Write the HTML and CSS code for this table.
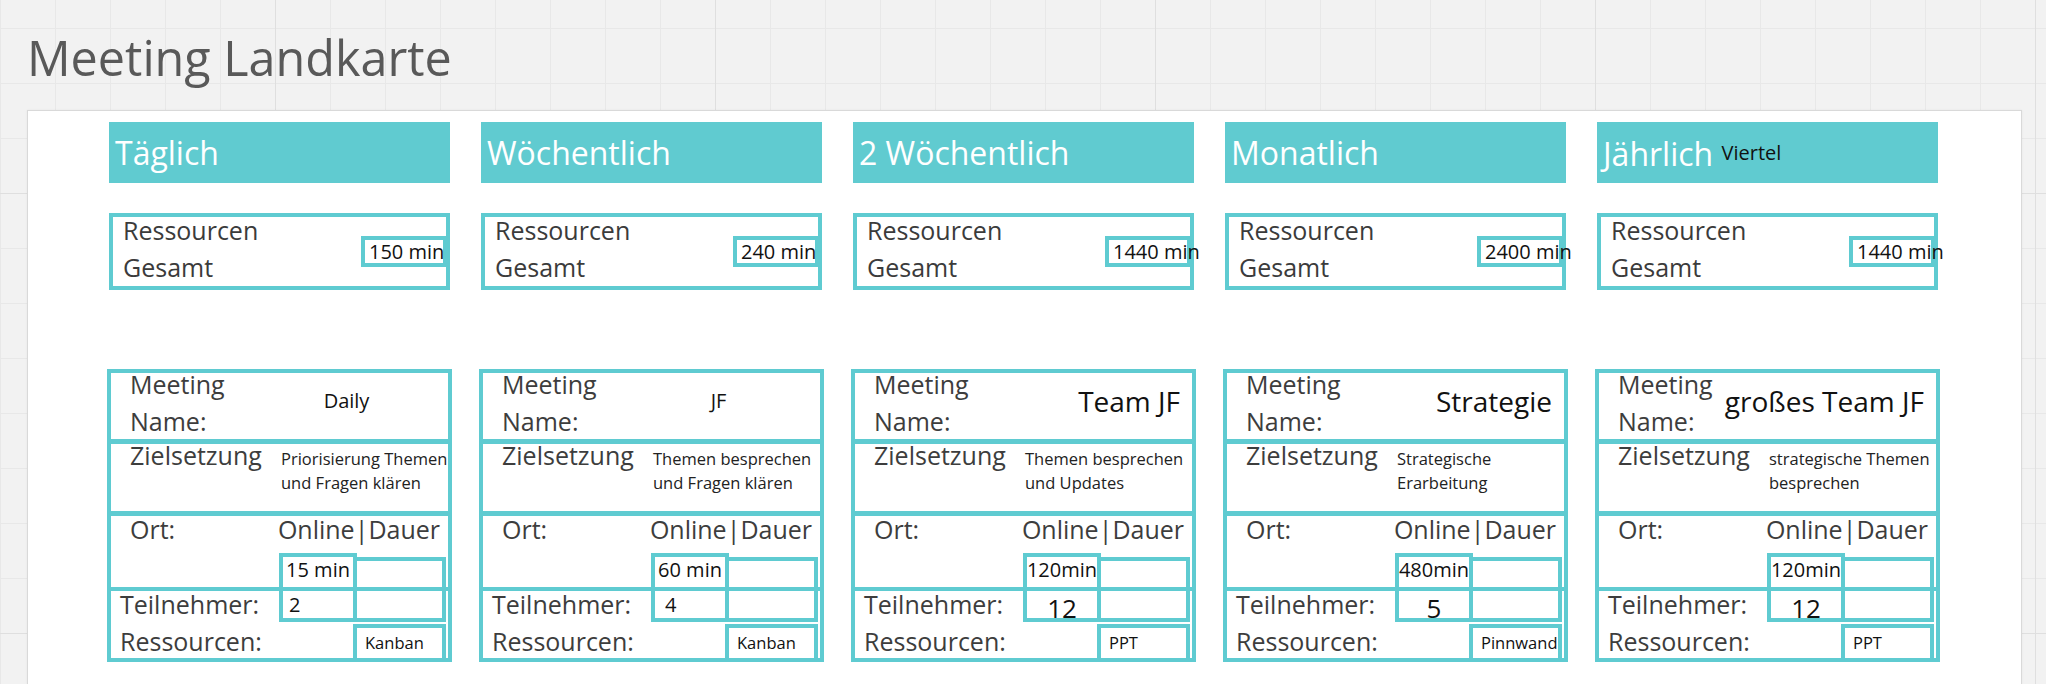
FILE: index.html
```html
<!DOCTYPE html>
<html lang="de">
<head>
<meta charset="utf-8">
<title>Meeting Landkarte</title>
<link rel="stylesheet" href="styles.css">
</head>
<body>
<div class="board">
  <h1 class="board-title">Meeting Landkarte</h1>
  <section class="frame">
    <div class="columns">

      <div class="col">
        <div class="col-head">Täglich</div>
        <div class="total">
          <div class="total-label">Ressourcen<br>Gesamt</div>
          <div class="total-val">150 min</div>
        </div>
        <div class="card">
          <div class="row row-name">
            <div class="lbl">Meeting<br>Name:</div>
            <div class="name-val">Daily</div>
          </div>
          <div class="row row-goal">
            <div class="lbl">Zielsetzung</div>
            <div class="goal-val">Priorisierung Themen<br>und Fragen klären</div>
          </div>
          <div class="row row-ort">
            <div class="lbl lbl-ort">Ort:</div>
            <div class="ort-head">Online|Dauer</div>
            <div class="c-dur">15 min</div>
            <div class="c-blank"></div>
          </div>
          <div class="row row-team">
            <div class="lbl lbl-team">Teilnehmer:</div>
            <div class="lbl lbl-res">Ressourcen:</div>
            <div class="c-num start">2</div>
            <div class="c-blank2"></div>
            <div class="c-res">Kanban</div>
          </div>
        </div>
      </div>

      <div class="col">
        <div class="col-head">Wöchentlich</div>
        <div class="total">
          <div class="total-label">Ressourcen<br>Gesamt</div>
          <div class="total-val">240 min</div>
        </div>
        <div class="card">
          <div class="row row-name">
            <div class="lbl">Meeting<br>Name:</div>
            <div class="name-val">JF</div>
          </div>
          <div class="row row-goal">
            <div class="lbl">Zielsetzung</div>
            <div class="goal-val">Themen besprechen<br>und Fragen klären</div>
          </div>
          <div class="row row-ort">
            <div class="lbl lbl-ort">Ort:</div>
            <div class="ort-head">Online|Dauer</div>
            <div class="c-dur">60 min</div>
            <div class="c-blank"></div>
          </div>
          <div class="row row-team">
            <div class="lbl lbl-team">Teilnehmer:</div>
            <div class="lbl lbl-res">Ressourcen:</div>
            <div class="c-num start wide">4</div>
            <div class="c-blank2"></div>
            <div class="c-res">Kanban</div>
          </div>
        </div>
      </div>

      <div class="col">
        <div class="col-head">2 Wöchentlich</div>
        <div class="total">
          <div class="total-label">Ressourcen<br>Gesamt</div>
          <div class="total-val">1440 min</div>
        </div>
        <div class="card">
          <div class="row row-name">
            <div class="lbl">Meeting<br>Name:</div>
            <div class="name-val big">Team JF</div>
          </div>
          <div class="row row-goal">
            <div class="lbl">Zielsetzung</div>
            <div class="goal-val">Themen besprechen<br>und Updates</div>
          </div>
          <div class="row row-ort">
            <div class="lbl lbl-ort">Ort:</div>
            <div class="ort-head">Online|Dauer</div>
            <div class="c-dur">120min</div>
            <div class="c-blank"></div>
          </div>
          <div class="row row-team">
            <div class="lbl lbl-team">Teilnehmer:</div>
            <div class="lbl lbl-res">Ressourcen:</div>
            <div class="c-num large">12</div>
            <div class="c-blank2"></div>
            <div class="c-res">PPT</div>
          </div>
        </div>
      </div>

      <div class="col">
        <div class="col-head">Monatlich</div>
        <div class="total">
          <div class="total-label">Ressourcen<br>Gesamt</div>
          <div class="total-val">2400 min</div>
        </div>
        <div class="card">
          <div class="row row-name">
            <div class="lbl">Meeting<br>Name:</div>
            <div class="name-val big">Strategie</div>
          </div>
          <div class="row row-goal">
            <div class="lbl">Zielsetzung</div>
            <div class="goal-val">Strategische<br>Erarbeitung</div>
          </div>
          <div class="row row-ort">
            <div class="lbl lbl-ort">Ort:</div>
            <div class="ort-head">Online|Dauer</div>
            <div class="c-dur">480min</div>
            <div class="c-blank"></div>
          </div>
          <div class="row row-team">
            <div class="lbl lbl-team">Teilnehmer:</div>
            <div class="lbl lbl-res">Ressourcen:</div>
            <div class="c-num large">5</div>
            <div class="c-blank2"></div>
            <div class="c-res">Pinnwand</div>
          </div>
        </div>
      </div>

      <div class="col">
        <div class="col-head">Jährlich <span class="head-note">Viertel</span></div>
        <div class="total">
          <div class="total-label">Ressourcen<br>Gesamt</div>
          <div class="total-val">1440 min</div>
        </div>
        <div class="card">
          <div class="row row-name">
            <div class="lbl">Meeting<br>Name:</div>
            <div class="name-val big">großes Team JF</div>
          </div>
          <div class="row row-goal">
            <div class="lbl">Zielsetzung</div>
            <div class="goal-val">strategische Themen<br>besprechen</div>
          </div>
          <div class="row row-ort">
            <div class="lbl lbl-ort">Ort:</div>
            <div class="ort-head">Online|Dauer</div>
            <div class="c-dur">120min</div>
            <div class="c-blank"></div>
          </div>
          <div class="row row-team">
            <div class="lbl lbl-team">Teilnehmer:</div>
            <div class="lbl lbl-res">Ressourcen:</div>
            <div class="c-num large">12</div>
            <div class="c-blank2"></div>
            <div class="c-res">PPT</div>
          </div>
        </div>
      </div>

    </div>
  </section>
</div>
</body>
</html>
```

FILE: styles.css
```css
html, body {
  margin: 0;
  padding: 0;
}

body {
  width: 2046px;
  height: 684px;
  overflow: hidden;
  font-family: "Open Sans", "Liberation Sans", sans-serif;
  background-color: #f2f2f2;
  background-image:
    linear-gradient(to right, #dfdfdf 1px, transparent 1px),
    linear-gradient(to bottom, #dfdfdf 1px, transparent 1px),
    linear-gradient(to right, #e8e8e8 1px, transparent 1px),
    linear-gradient(to bottom, #e8e8e8 1px, transparent 1px);
  background-size: 440px 440px, 440px 440px, 55px 55px, 55px 55px;
  background-position: 275px 0, 0 193px, 0 0, 0 28px;
}

.board {
  padding-left: 27px;
}

.board-title {
  margin: 0;
  padding-top: 33px;
  height: 48px;
  font-size: 48.5px;
  line-height: 48px;
  font-weight: 400;
  color: #595959;
  white-space: nowrap;
}

.frame {
  margin-top: 29px;
  width: 1995px;
  height: 574px;
  box-sizing: border-box;
  background: #ffffff;
  border: 1px solid #d9d9d9;
  border-bottom: 0;
  box-shadow: 0 0 2px rgba(0, 0, 0, 0.06);
  padding: 11px 0 0 81px;
}

.columns {
  display: flex;
  gap: 31px;
}

.col {
  width: 341px;
  display: flex;
  flex-direction: column;
}

.col-head {
  height: 61px;
  box-sizing: border-box;
  background: #60cbd0;
  color: #ffffff;
  font-size: 32px;
  line-height: 61px;
  padding-left: 6px;
  white-space: nowrap;
  overflow: hidden;
}

.head-note {
  font-size: 20px;
  color: #111111;
  vertical-align: 6px;
}

/* Ressourcen Gesamt box */
.total {
  margin-top: 30px;
  height: 77px;
  box-sizing: border-box;
  border: 4px solid #5fcbd1;
  display: flex;
  align-items: center;
  justify-content: space-between;
}

.total-label {
  align-self: flex-start;
  margin-top: -5px;
  padding-left: 10px;
  font-size: 25px;
  line-height: 37px;
  color: #3b3b3b;
  white-space: nowrap;
}

.total-val {
  width: 86px;
  height: 31px;
  box-sizing: border-box;
  border: 4px solid #5fcbd1;
  margin-right: -1px;
  padding-left: 4px;
  font-size: 20px;
  line-height: 23px;
  color: #111111;
  white-space: nowrap;
}

/* Meeting card */
.card {
  margin: 79px -2px 0;
  height: 293px;
  box-sizing: border-box;
  border: 4px solid #5fcbd1;
  display: flex;
  flex-direction: column;
}

.row {
  box-sizing: border-box;
  border-bottom: 5px solid #5fcbd1;
}

.lbl {
  padding-left: 19px;
  margin-top: -7px;
  font-size: 25px;
  line-height: 37px;
  color: #3d3d3d;
  white-space: nowrap;
}

.row-name {
  height: 71px;
  display: grid;
  grid-template-columns: 134px minmax(0, 1fr);
}

.name-val {
  min-width: 0;
  display: flex;
  justify-content: center;
  padding-top: 18px;
  font-size: 20px;
  line-height: 20px;
  color: #111111;
  white-space: nowrap;
}

.name-val.big {
  justify-content: flex-end;
  padding-right: 12px;
  padding-top: 14px;
  font-size: 28px;
  line-height: 28px;
}

.row-goal {
  height: 72px;
  display: grid;
  grid-template-columns: 170px minmax(0, 1fr);
}

.goal-val {
  min-width: 0;
  padding-top: 3px;
  font-size: 16.5px;
  line-height: 24px;
  color: #222222;
  white-space: nowrap;
}

.row-ort {
  height: 75px;
  border-bottom-width: 4px;
  display: grid;
  grid-template-columns: 168px 78px minmax(0, 1fr);
  grid-template-rows: 37px 34px;
}

.lbl-ort {
  grid-column: 1;
  grid-row: 1;
  margin-top: -5px;
}

.ort-head {
  grid-column: 2 / 4;
  grid-row: 1;
  justify-self: end;
  padding-right: 8px;
  margin-top: -5px;
  font-size: 25px;
  line-height: 37px;
  color: #3d3d3d;
  white-space: nowrap;
}

.c-dur {
  grid-column: 2;
  grid-row: 2;
  box-sizing: border-box;
  border: 4px solid #5fcbd1;
  border-bottom: 0;
  display: flex;
  align-items: center;
  justify-content: center;
  padding-bottom: 4px;
  font-size: 20px;
  line-height: 20px;
  color: #111111;
  white-space: nowrap;
}

.c-blank {
  grid-column: 3;
  grid-row: 2;
  margin-top: 4px;
  margin-right: 2px;
  box-sizing: border-box;
  border-top: 4px solid #5fcbd1;
  border-right: 4px solid #5fcbd1;
}

.row-team {
  height: 67px;
  border-bottom: 0;
  display: grid;
  grid-template-columns: 168px 78px minmax(0, 1fr);
  grid-template-rows: 31px 36px;
}

.lbl-team {
  grid-column: 1;
  grid-row: 1;
  padding-left: 9px;
  margin-top: -5px;
}

.lbl-res {
  grid-column: 1 / 3;
  grid-row: 2;
  padding-left: 9px;
  margin-top: 1px;
}

.c-num {
  grid-column: 2;
  grid-row: 1;
  box-sizing: border-box;
  border: 4px solid #5fcbd1;
  border-top: 0;
  display: flex;
  align-items: center;
  justify-content: center;
  font-size: 20px;
  line-height: 20px;
  color: #111111;
}

.c-num.start {
  justify-content: flex-start;
  padding-left: 6px;
}

.c-num.wide {
  padding-left: 10px;
}

.c-num.large {
  font-size: 26px;
  line-height: 26px;
  padding-top: 6px;
}

.c-blank2 {
  grid-column: 3;
  grid-row: 1;
  margin-right: 2px;
  box-sizing: border-box;
  border-bottom: 4px solid #5fcbd1;
  border-right: 4px solid #5fcbd1;
}

.c-res {
  grid-column: 3;
  grid-row: 2;
  margin-top: 2px;
  margin-left: -4px;
  margin-right: 2px;
  box-sizing: border-box;
  border-top: 4px solid #5fcbd1;
  border-left: 4px solid #5fcbd1;
  border-right: 4px solid #5fcbd1;
  display: flex;
  align-items: center;
  padding-left: 8px;
  font-size: 16.5px;
  line-height: 20px;
  color: #111111;
  white-space: nowrap;
}
```
